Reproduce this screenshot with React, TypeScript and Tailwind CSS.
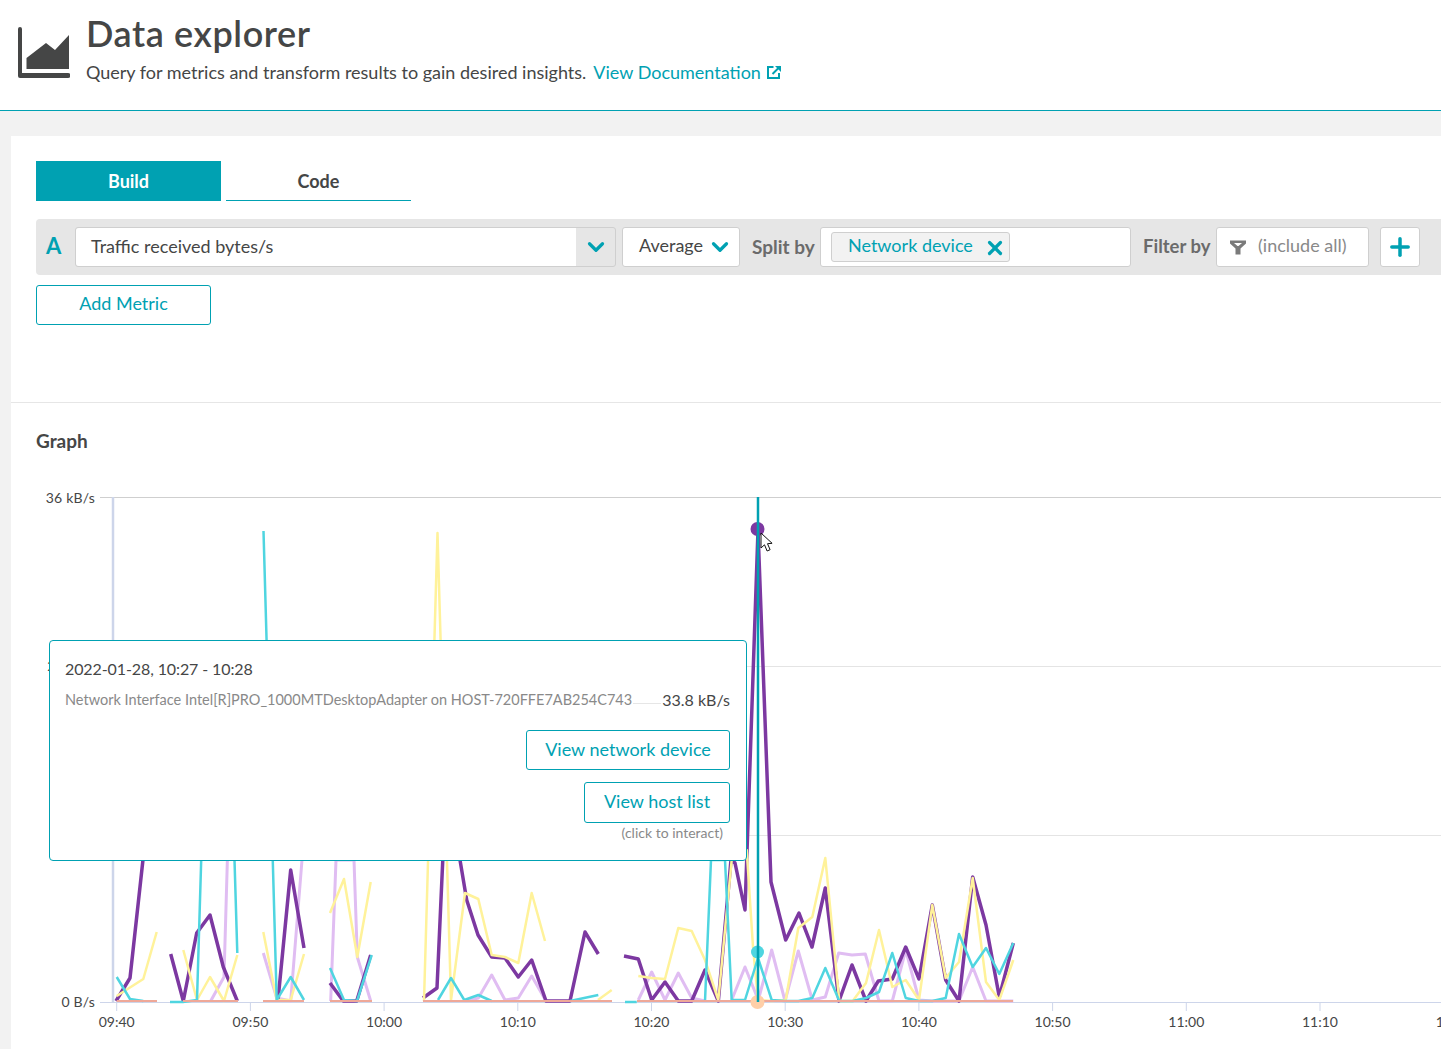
import { ChevronDown, Plus, X } from "lucide-react";

type Point = [number, number];

const PURPLE: Point[][] = [
  [[116, 1001], [130, 978], [143.5, 855], [157, 700]],
  [[170.7, 954], [183.3, 1001], [196.7, 933], [210, 915], [223.3, 967], [237.3, 1001]],
  [[278, 1000], [290.7, 870], [304, 948]],
  [[330, 983], [343.3, 1001], [356.7, 1001], [370.7, 955]],
  [[423, 998], [437, 988], [450, 700], [460, 860], [466.7, 900], [478, 935], [491.7, 957], [505, 958], [518.3, 977], [531.7, 960], [546, 1001], [570, 1001], [585, 932], [598.3, 954]],
  [[624, 956], [638.3, 959], [651.7, 1000], [665, 982], [678.3, 1001], [691.7, 1001], [705, 970], [718.3, 1001], [731, 860], [735, 863], [745, 910], [758, 530], [771, 882], [785.7, 940], [799, 913], [812, 947], [825.3, 888], [839, 1001], [852, 965], [866, 1001], [878.3, 981], [892.3, 979], [905.7, 947], [919, 979], [932.3, 905], [945.7, 980], [959, 1001], [972.7, 877], [986, 925], [999.3, 997], [1013.3, 943]],
];

const YELLOW: Point[][] = [
  [[116.7, 996], [143.3, 979], [156.7, 932]],
  [[183.3, 950], [197, 1000], [210, 977], [224, 1001], [237.3, 955]],
  [[263.3, 932], [276.7, 1000], [290.7, 1000], [304, 954]],
  [[330, 913], [344, 879], [357.3, 957], [370.7, 882]],
  [[424, 1001], [437.5, 533], [451, 1000], [465, 893], [478.3, 899], [491.7, 955], [505, 957], [518.3, 963], [531.7, 893], [545, 941]],
  [[598, 1000], [611.7, 990]],
  [[638.3, 976], [651.7, 978], [665, 979], [678.3, 928], [691.7, 931], [705, 960], [718.3, 1000], [731.7, 860], [746.7, 850], [753, 947], [758, 1000], [772, 1001], [785.7, 1000], [798.3, 928], [812.3, 917], [825.3, 858], [839.3, 1001], [852.7, 1001], [866, 983], [879, 930], [892.3, 987], [905.7, 980], [919, 1000], [932.3, 905], [945.7, 978], [959, 962], [972.7, 878], [986, 982], [999.3, 1000], [1013.3, 960]],
];

const CYAN: Point[][] = [
  [[116.7, 977], [130, 999], [143.3, 1001]],
  [[170, 1002], [183, 1002], [197, 1000], [203, 800], [232.7, 800], [237.3, 953]],
  [[263.5, 531], [276.7, 1000], [290.7, 977], [304, 1000]],
  [[330, 968], [344, 1000], [357, 1001], [371.7, 955]],
  [[438, 1000], [451, 978], [464.3, 1000], [478.3, 995], [491.7, 1001]],
  [[570, 1001], [598.3, 995]],
  [[625, 1002], [636.7, 1002]],
  [[705, 1001], [711, 860], [725, 860], [731.7, 1000], [745, 1000], [758, 958], [771.7, 1000], [785, 1001], [798.3, 1001], [812.3, 998], [825.3, 968], [839.3, 1001], [852.7, 1001], [866, 998], [879, 992], [892.3, 953], [905.7, 998], [919, 1001], [932.3, 1001], [945.7, 998], [959, 934], [972.7, 967], [986, 948], [999.3, 974], [1013.3, 943]],
];

const LILAC: Point[][] = [
  [[210.7, 1001], [224, 977], [232, 700]],
  [[263.3, 953], [276.7, 998], [290.7, 1001], [302, 860]],
  [[330.7, 1001], [336, 860], [354, 860], [357.3, 957], [370.7, 1001]],
  [[465, 1001], [478.3, 998], [491.7, 975], [505, 1000], [518.3, 998], [531.7, 976], [546, 1001]],
  [[638.3, 1000], [651.7, 972], [665, 1000], [678.3, 973], [691.7, 998], [705, 1001]],
  [[731.7, 1000], [745, 967], [758.3, 1000], [771.7, 950], [785, 1001], [798.3, 951], [812.3, 1000], [825.3, 997], [838.7, 953], [852, 955], [865.3, 954], [879, 1001], [892.3, 1001], [905.7, 950], [919, 1000], [932.3, 1001], [945.7, 1001], [959, 1001], [972.7, 967], [986, 1001], [1013.3, 1001]],
];

const SALMON: Point[][] = [
  [[116.7, 1001], [157, 1001]],
  [[183, 1001], [238, 1001]],
  [[263, 1001], [304, 1001]],
  [[330, 1001], [372, 1001]],
  [[423, 1001], [612, 1001]],
  [[637, 1001], [1013, 1001]],
];

const TIMES = ["09:40", "09:50", "10:00", "10:10", "10:20", "10:30", "10:40", "10:50", "11:00", "11:10", "11:20"];

function Lines({ data, color, width }: { data: Point[][]; color: string; width: number }) {
  return (
    <>
      {data.map((seg, i) => (
        <polyline
          key={i}
          points={seg.map((p) => p.join(",")).join(" ")}
          fill="none"
          stroke={color}
          strokeWidth={width}
          strokeLinejoin="round"
        />
      ))}
    </>
  );
}

function Chart() {
  return (
    <svg className="block" width={1430} height={589} viewBox="11 460 1430 589" fontFamily="Lato, sans-serif">
      <line x1={100} x2={1441} y1={497.5} y2={497.5} stroke="#cfcfcf" />
      <line x1={113} x2={1441} y1={666.5} y2={666.5} stroke="#e4e4e4" />
      <line x1={113} x2={1441} y1={835.5} y2={835.5} stroke="#e4e4e4" />
      <line x1={113} x2={113} y1={497} y2={1002} stroke="#cdd5ea" strokeWidth={2.5} />
      <line x1={100} x2={1441} y1={1002.5} y2={1002.5} stroke="#cdd5ea" />
      <text x={95} y={503} textAnchor="end" fontSize={14} letterSpacing={0.2} fill="#454646">36 kB/s</text>
      <text x={95} y={671} textAnchor="end" fontSize={14} fill="#454646">24 kB/s</text>
      <text x={95} y={1007} textAnchor="end" fontSize={14} letterSpacing={0.2} fill="#454646">0 B/s</text>
      {TIMES.map((t, i) => {
        const x = 116.7 + i * 133.7;
        return (
          <g key={t}>
            <line x1={x} x2={x} y1={1003} y2={1011} stroke="#cdd5ea" />
            <text x={x} y={1027} textAnchor="middle" fontSize={14} fill="#454646">{t}</text>
          </g>
        );
      })}
      <Lines data={LILAC} color="#e0bdf2" width={3} />
      <Lines data={PURPLE} color="#7c38a1" width={3.5} />
      <Lines data={YELLOW} color="#fff29a" width={2.5} />
      <Lines data={CYAN} color="#4fd5e0" width={2.5} />
      <Lines data={SALMON} color="#efa898" width={2} />
      <circle cx={757.5} cy={529} r={7} fill="#7c38a1" />
      <circle cx={757.5} cy={952} r={6.5} fill="#4fd5e0" />
      <circle cx={757.5} cy={1002} r={7} fill="#ffcfa8" />
      <line x1={758} x2={758} y1={497} y2={1002} stroke="#00a1b2" strokeWidth={2.5} />
      <path d="M761 533v15l3.5-3.2 2.6 6.2 3-1.3-2.6-6 4.6-.4z" fill="#fff" stroke="#111" strokeWidth={1} />
    </svg>
  );
}

function Tooltip() {
  return (
    <div className="absolute left-[38px] top-[180px] flex h-[221px] w-[698px] flex-col rounded-[4px] border border-[#00a1b2] bg-white pl-[15px] pr-[16px] pt-[17px]">
      <div className="text-[16px] leading-[22px] tracking-[-0.1px] text-[#454646]">2022-01-28, 10:27 - 10:28</div>
      <div className="mt-[9px] flex h-[22px] items-center">
        <span className="whitespace-nowrap text-[14.5px] text-[#898989]">
          Network Interface Intel[R]PRO_1000MTDesktopAdapter on HOST-720FFE7AB254C743
        </span>
        <span className="mx-[1px] mt-[6px] h-px flex-1 bg-[#e6e6e6]" />
        <span className="whitespace-nowrap text-[16px] text-[#454646]">33.8 kB/s</span>
      </div>
      <div className="mt-[19px] flex flex-col items-end gap-[12px]">
        <button className="flex h-[40px] w-[204px] items-center justify-center rounded-[3px] border border-[#00a1b2] pb-[2px] text-[18px] text-[#00a1b2]">
          View network device
        </button>
        <button className="flex h-[41px] w-[146px] items-center justify-center rounded-[3px] border border-[#00a1b2] pb-[2px] text-[18px] text-[#00a1b2]">
          View host list
        </button>
      </div>
      <div className="mt-[1px] pr-[7px] text-right text-[14px] leading-[18px] text-[#898989]">(click to interact)</div>
    </div>
  );
}

function App() {
  return (
    <div className="h-[1049px] w-[1441px] overflow-hidden bg-white font-['Lato',sans-serif] text-[#454646]">
      <header className="flex h-[111px] border-b border-[#00a1b2] pl-[18px]">
        <svg className="mt-[27px] shrink-0" width={52} height={52} viewBox="0 0 52 52" fill="#454646">
          <path d="M2 0a2 2 0 0 1 2 2v44h46a2 2 0 0 1 0 5H2a2 2 0 0 1-2-2V2a2 2 0 0 1 2-2z" />
          <path d="M8.5 31 28 16l9 7L51 8v34H8.5z" />
        </svg>
        <div className="ml-[16px] pt-[11px]">
          <h1 className="text-[36px] font-semibold leading-[44px] tracking-[0.6px]">Data explorer</h1>
          <p className="mt-[5px] flex items-center text-[18px] leading-[24px]">
            Query for metrics and transform results to gain desired insights.
            <span className="ml-[7px] text-[#00a1b2]">View Documentation</span>
            <svg className="ml-[6px]" width={15} height={14} viewBox="0 0 15 14" fill="none" stroke="#00a1b2" strokeWidth={2}>
              <path d="M6.5 2H1v11h11V8" />
              <path d="M5.5 9 13 1.5" />
              <path d="M8 1h6v6z" fill="#00a1b2" stroke="none" />
            </svg>
          </p>
        </div>
      </header>

      <div className="bg-[#f2f2f2] pl-[11px] pt-[25px]">
        <main className="bg-white">
          <section className="h-[267px] border-b border-[#e6e6e6] pt-[25px]">
            <div className="flex pl-[25px]">
              <button className="h-[40px] w-[185px] bg-[#00a1b2] text-[18px] font-bold text-white">Build</button>
              <button className="ml-[5px] h-[40px] w-[185px] border-b border-[#00a1b2] pt-[1px] text-[18px] font-bold">Code</button>
            </div>

            <div className="ml-[25px] mt-[18px] flex h-[56px] items-center rounded-l-[4px] bg-[#e6e6e6] pl-[10px]">
              <span className="w-[29px] pb-[4px] text-[22px] font-bold text-[#00a1b2]">A</span>
              <div className="flex h-[40px] w-[541px] items-center rounded-[3px] border border-[#cfcfcf]">
                <div className="flex h-full w-[500px] items-center rounded-l-[3px] bg-white pb-[2px] pl-[15px] text-[18px]">
                  Traffic received bytes/s
                </div>
                <ChevronDown className="ml-[7px] text-[#00a1b2]" size={26} strokeWidth={3} />
              </div>
              <div className="ml-[6px] flex h-[40px] w-[118px] items-center justify-between rounded-[3px] border border-[#cfcfcf] bg-white pb-[4px] pl-[16px] pr-[6px] text-[18px]">
                Average
                <ChevronDown className="mt-[4px] text-[#00a1b2]" size={26} strokeWidth={3} />
              </div>
              <span className="ml-[12px] w-[68px] whitespace-nowrap text-[19px] font-bold text-[#6b6b6b]">Split by</span>
              <div className="flex h-[40px] w-[311px] items-center rounded-[3px] border border-[#cfcfcf] bg-white pl-[10px]">
                <div className="flex h-[30px] w-[179px] items-center rounded-[3px] border border-[#cfcfcf] bg-[#f2f2f2] pb-[4px] pl-[16px] text-[18px] text-[#00a1b2]">
                  <span className="whitespace-nowrap">Network device</span>
                  <X className="ml-[11px] mt-[5px] shrink-0" size={22} strokeWidth={3.5} />
                </div>
              </div>
              <span className="ml-[12px] w-[73px] whitespace-nowrap text-[18.5px] font-bold text-[#6b6b6b]">Filter by</span>
              <div className="flex h-[40px] w-[153px] items-center rounded-[3px] border border-[#cfcfcf] bg-white pl-[13px] text-[18px] text-[#898989]">
                <svg width={16} height={15} viewBox="0 0 16 15" fill="#7a7a7a">
                  <path fillRule="evenodd" d="M0 .5h16v3L10.5 8.5v6h-5v-6L0 3.5zM4 3l3.5 3h1L12 3z" />
                </svg>
                <span className="mb-[4px] ml-[12px]">(include all)</span>
              </div>
              <div className="ml-[11px] flex h-[40px] w-[40px] items-center justify-center rounded-[3px] border border-[#cfcfcf] bg-white">
                <Plus className="text-[#00a1b2]" size={28} strokeWidth={3} />
              </div>
            </div>

            <button className="ml-[25px] mt-[10px] h-[40px] w-[175px] rounded-[3px] border border-[#00a1b2] pb-[4px] text-[18px] text-[#00a1b2]">
              Add Metric
            </button>
          </section>

          <section>
            <h2 className="h-[57px] pl-[25px] pt-[26px] text-[19px] font-bold leading-[24px]">Graph</h2>
            <div className="relative">
              <Chart />
              <Tooltip />
            </div>
          </section>
        </main>
      </div>
    </div>
  );
}

export default App;
